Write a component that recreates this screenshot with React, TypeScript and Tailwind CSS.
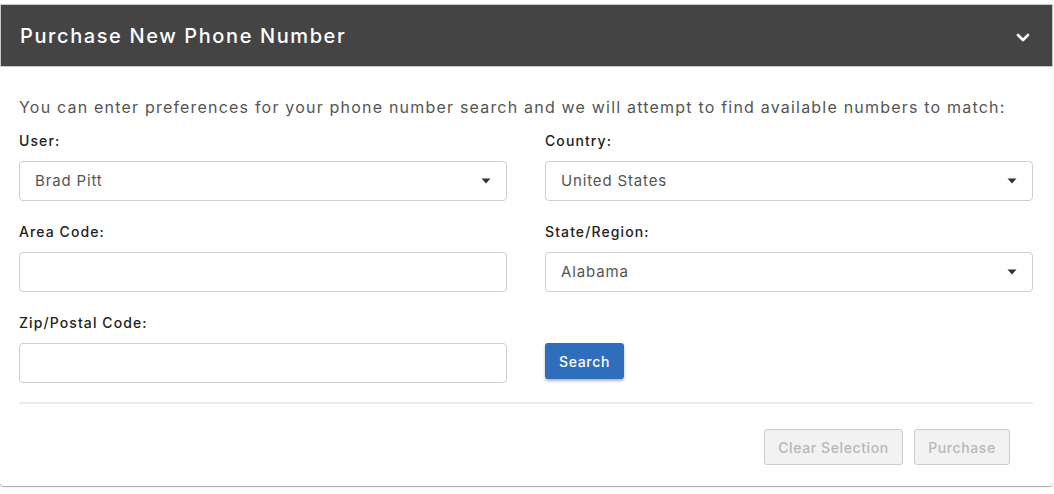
import React from "react";

const Caret = () => (
  <svg width="10" height="6" viewBox="0 0 10 6" className="shrink-0">
    <path d="M0.5 0.5h9L5 5.5z" fill="#333" />
  </svg>
);

const Field = ({ label, value, select }: { label: string; value?: string; select?: boolean }) => (
  <div className="flex flex-col">
    <label className="text-[14px] leading-[20px] font-medium text-[#222] mb-[10px] tracking-[1.1px]">{label}</label>
    <div className="h-[40px] border border-[#cfcfcf] rounded-[4px] bg-white flex items-center justify-between pl-[15px] pr-[15px]">
      <span className="text-[15px] text-[#555] tracking-[0.85px]">{value}</span>
      {select && <Caret />}
    </div>
  </div>
);

export default function App() {
  return (
    <div className="w-[1054px] h-[494px] bg-white pt-[4px]" style={{ fontFamily: 'Inter, "Liberation Sans", sans-serif' }}>
      <div className="w-[1053px] rounded-b-[4px] shadow-[0_1px_1px_rgba(0,0,0,0.35)]">
        {/* header */}
        <div className="h-[63px] bg-[#444444] border border-[#c8c8c8] flex items-center justify-between pl-[19px] pr-[22px]">
          <h2 className="text-[20px] font-medium text-white tracking-[1.6px]">Purchase New Phone Number</h2>
          <svg width="14" height="9" viewBox="0 0 14 9" className="mt-[4px]">
            <path d="M2 2l5 5 5-5" fill="none" stroke="#fff" strokeWidth="2.6" strokeLinecap="round" strokeLinejoin="round" />
          </svg>
        </div>

        {/* body */}
        <div className="pl-[19px] pr-[20px] pt-[28px]">
          <p className="text-[16px] leading-[24px] text-[#555] tracking-[1.2px]">
            You can enter preferences for your phone number search and we will attempt to find available numbers to match:
          </p>
          <div className="grid grid-cols-2 gap-x-[38px] gap-y-[21px] mt-[12px]">
            <Field label="User:" value="Brad Pitt" select />
            <Field label="Country:" value="United States" select />
            <Field label="Area Code:" />
            <Field label="State/Region:" value="Alabama" select />
            <Field label="Zip/Postal Code:" />
            <div className="flex items-start pt-[30px]">
              <button className="h-[36px] w-[79px] bg-[#2f6dbd] text-white text-[14px] font-medium tracking-[0.7px] rounded-[3px] shadow-[0_2px_3px_rgba(0,0,0,0.3)]">
                Search
              </button>
            </div>
          </div>
          <div className="h-[2px] bg-[#ebebeb] mt-[19px]" />
          <div className="flex justify-end gap-[11px] pt-[25px] pb-[21px] pr-[23px]">
            <button className="h-[36px] w-[139px] bg-[#f2f2f2] border border-[#cccccc] rounded-[3px] text-[14px] font-medium tracking-[0.6px] text-[#b8b8b8]">
              Clear Selection
            </button>
            <button className="h-[36px] w-[96px] bg-[#f2f2f2] border border-[#cccccc] rounded-[3px] text-[14px] font-medium tracking-[0.6px] text-[#b8b8b8]">
              Purchase
            </button>
          </div>
        </div>
      </div>
    </div>
  );
}
